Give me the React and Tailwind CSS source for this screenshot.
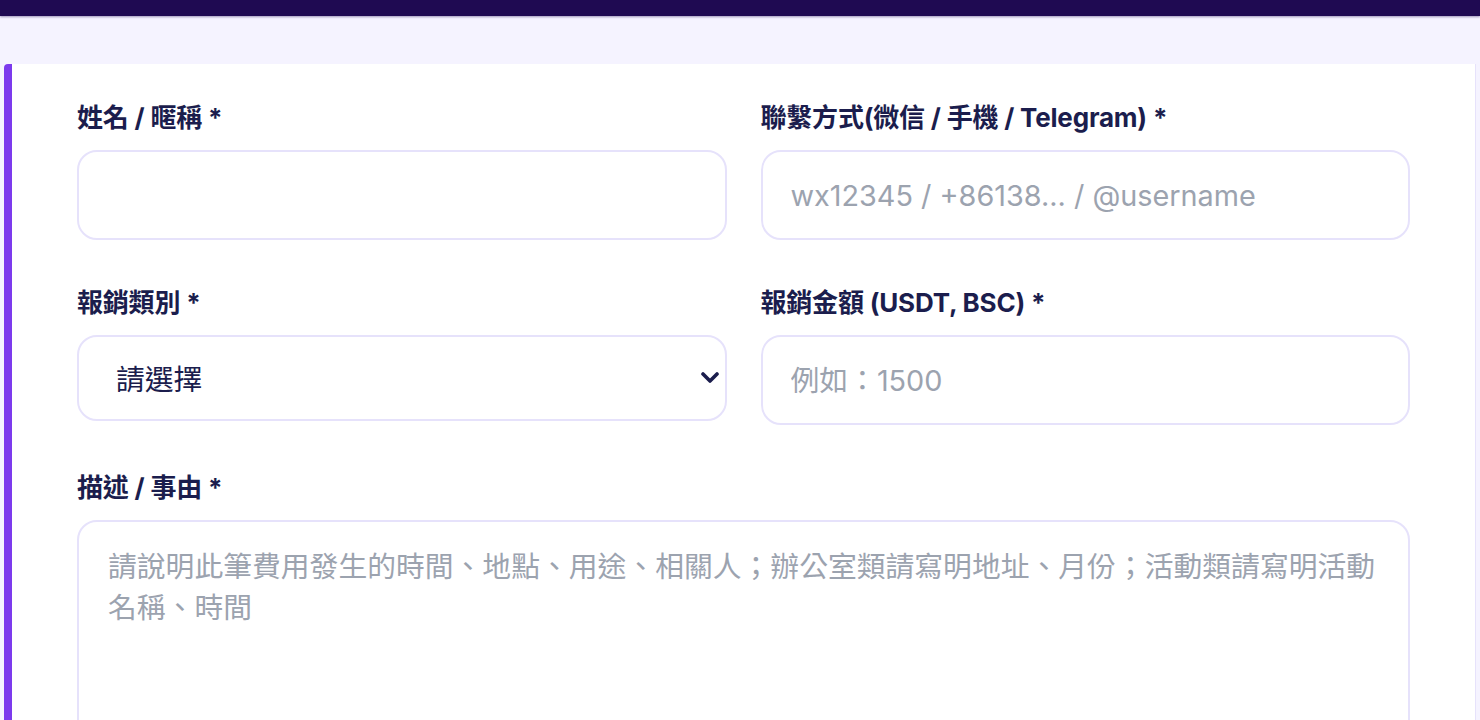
import React from 'react';

const font = { fontFamily: 'Inter, "Noto Sans CJK TC", "Noto Sans", sans-serif' };

const Label = ({ children }) => (
  <label className="block text-[26px] leading-[36px] font-bold text-[#1b1d4d] mb-[14px] tracking-[-0.2px]">
    {children}
  </label>
);

const inputCls =
  'w-full h-[90px] rounded-[20px] border-2 border-[#e6e2fb] bg-white px-[28px] text-[28.8px] text-[#1b1d4d] placeholder:text-[#9ca3af] outline-none';

export default function App() {
  return (
    <div className="min-h-screen bg-[#f5f3ff] overflow-hidden" style={font}>
      <div className="h-[16px] bg-[#1f0a52] shadow-[0_1px_2px_rgba(31,10,82,0.4)]" />
      <div className="h-[48px]" />
      <div className="ml-[4px] mr-[4px] bg-white border-l-[8px] border-[#7c3aed] border-r border-r-[#e6e2fb] rounded-tl-[4px] pt-[36px] px-[65px] pb-[40px]">
        <div className="grid grid-cols-2 gap-x-[34px] gap-y-[45px]">
          <div>
            <Label>姓名 / 暱稱 *</Label>
            <input type="text" className={inputCls} />
          </div>
          <div>
            <Label>聯繫方式(微信 / 手機 / Telegram) *</Label>
            <input type="text" className={inputCls} placeholder="wx12345 / +86138... / @username" />
          </div>

          <div>
            <Label>報銷類別 *</Label>
            <div className="relative">
              <select className="w-full h-[86px] appearance-none rounded-[20px] border-2 border-[#e6e2fb] bg-white pl-[37px] pr-[50px] pt-[4px] text-[28.8px] text-[#1b1d4d] outline-none">
                <option>請選擇</option>
                <option>辦公室</option>
                <option>活動</option>
              </select>
              <svg
                className="absolute right-[8px] top-1/2 -translate-y-1/2 w-[18px] h-[12px] pointer-events-none"
                viewBox="0 0 18 12"
                fill="none"
              >
                <polyline points="2,2 9,9 16,2" stroke="#1b1d4d" strokeWidth="3.6" strokeLinecap="round" strokeLinejoin="round" />
              </svg>
            </div>
          </div>
          <div>
            <Label>報銷金額 (USDT, BSC) *</Label>
            <input type="number" className={inputCls} placeholder="例如：1500" />
          </div>

          <div className="col-span-2">
            <Label>描述 / 事由 *</Label>
            <textarea
              className="w-full h-[280px] resize-none rounded-[20px] border-2 border-[#e6e2fb] bg-white px-[29px] pt-[24px] text-[28.8px] leading-[41px] text-[#1b1d4d] placeholder:text-[#9ca3af] outline-none"
              placeholder="請說明此筆費用發生的時間、地點、用途、相關人；辦公室類請寫明地址、月份；活動類請寫明活動名稱、時間"
            />
          </div>
        </div>
      </div>
    </div>
  );
}
